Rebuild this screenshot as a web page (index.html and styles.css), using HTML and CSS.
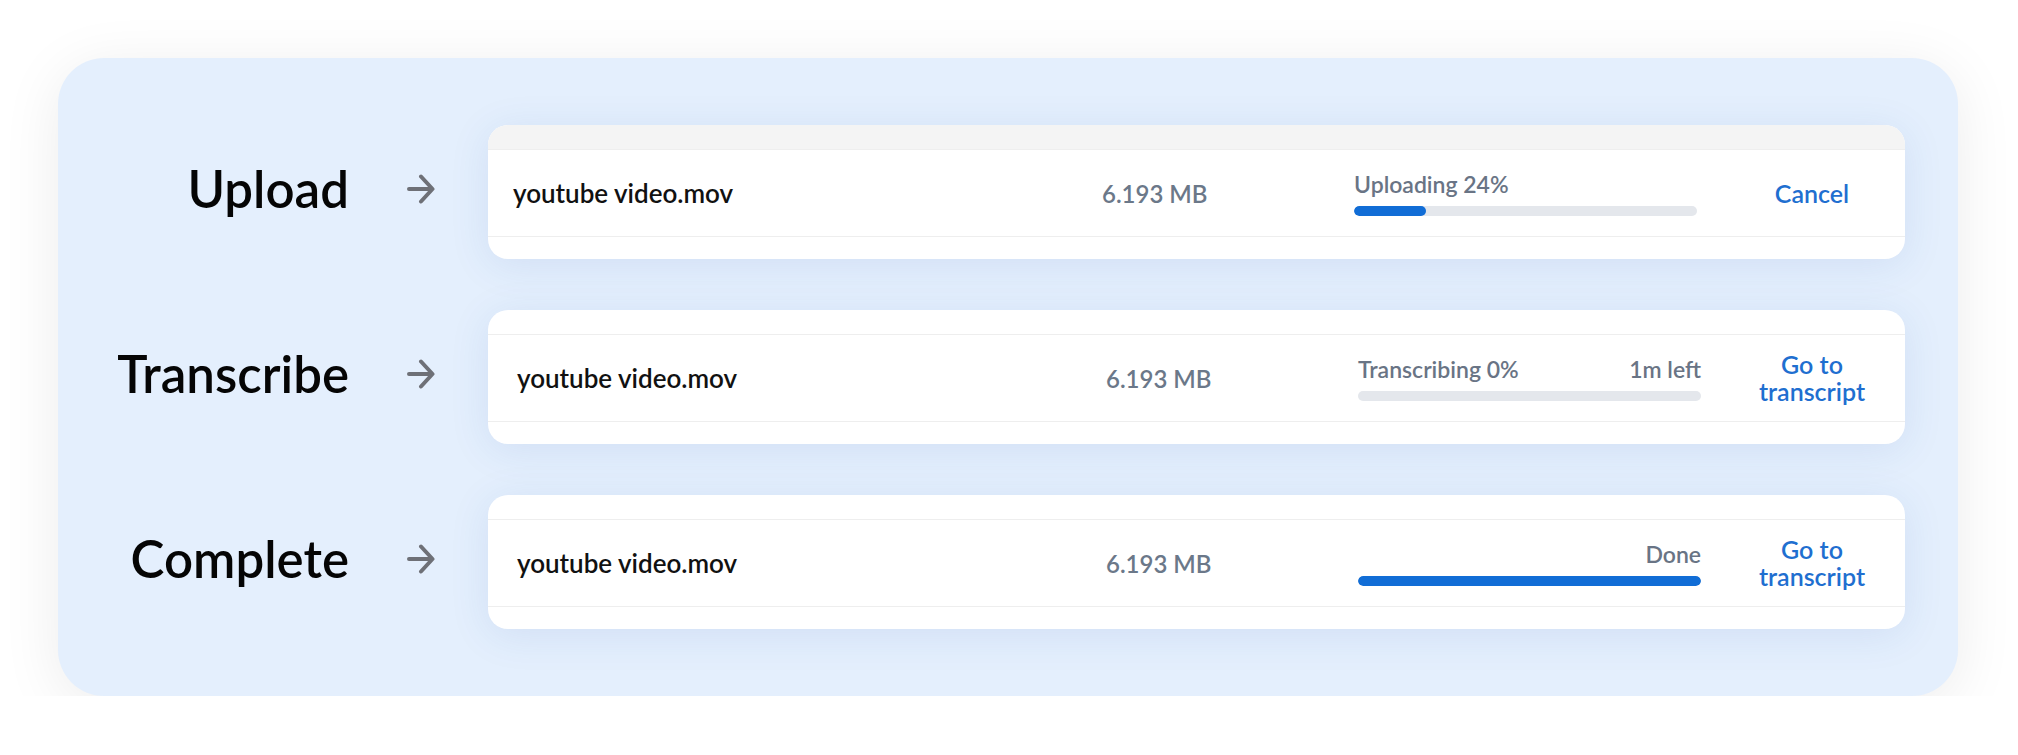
FILE: index.html
```html
<!DOCTYPE html>
<html lang="en">
<head>
<meta charset="utf-8">
<title>Upload flow</title>
<link rel="stylesheet" href="styles.css">
</head>
<body>
<main class="panel">
  <section class="step">
    <h2 class="step-label">Upload</h2>
    <svg class="step-arrow" viewBox="0 0 28 32" aria-hidden="true"><path d="M2 16H25M14 3.5L25.5 16L14 28.5"/></svg>
    <div class="card">
      <div class="card-head card-head--gray"></div>
      <div class="row row--shift">
        <div class="file-name">youtube video.mov</div>
        <div class="file-size">6.193 MB</div>
        <div class="progress">
          <div class="progress-text"><span>Uploading 24%</span></div>
          <div class="bar"><div class="bar-fill" style="width:21%"></div></div>
        </div>
        <div class="action">Cancel</div>
      </div>
      <div class="card-foot"></div>
    </div>
  </section>

  <section class="step">
    <h2 class="step-label">Transcribe</h2>
    <svg class="step-arrow" viewBox="0 0 28 32" aria-hidden="true"><path d="M2 16H25M14 3.5L25.5 16L14 28.5"/></svg>
    <div class="card">
      <div class="card-head"></div>
      <div class="row">
        <div class="file-name">youtube video.mov</div>
        <div class="file-size">6.193 MB</div>
        <div class="progress">
          <div class="progress-text"><span>Transcribing 0%</span><span>1m left</span></div>
          <div class="bar"></div>
        </div>
        <div class="action">Go to<br>transcript</div>
      </div>
      <div class="card-foot"></div>
    </div>
  </section>

  <section class="step">
    <h2 class="step-label">Complete</h2>
    <svg class="step-arrow" viewBox="0 0 28 32" aria-hidden="true"><path d="M2 16H25M14 3.5L25.5 16L14 28.5"/></svg>
    <div class="card">
      <div class="card-head"></div>
      <div class="row">
        <div class="file-name">youtube video.mov</div>
        <div class="file-size">6.193 MB</div>
        <div class="progress">
          <div class="progress-text progress-text--end"><span>Done</span></div>
          <div class="bar"><div class="bar-fill" style="width:100%"></div></div>
        </div>
        <div class="action">Go to<br>transcript</div>
      </div>
      <div class="card-foot"></div>
    </div>
  </section>
</main>
</body>
</html>
```

FILE: styles.css
```css
* { box-sizing: border-box; }

html, body {
  margin: 0;
  background: #ffffff;
}

body {
  font-family: Lato, "Open Sans", sans-serif;
  color: #0b0b0b;
  padding: 58px 0 0 58px;
}

.panel {
  width: 1900px;
  background: #e4effd;
  border-radius: 46px;
  padding: 67px 53px 67px 0;
  display: flex;
  flex-direction: column;
  gap: 51px;
  box-shadow: 0 10px 60px rgba(0, 0, 0, 0.08);
}

.step {
  display: flex;
  align-items: center;
}

.step-label {
  width: 291px;
  margin: 0 0 6px 0;
  text-align: right;
  font-size: 51px;
  font-weight: 600;
  line-height: 60px;
  color: #050505;
}

.step-arrow {
  width: 28px;
  height: 32px;
  margin: 0 53px 6px 58px;
  fill: none;
  stroke: #6e7077;
  stroke-width: 4;
  stroke-linecap: round;
  stroke-linejoin: round;
  flex: none;
}

.card {
  flex: 1;
  background: #ffffff;
  border-radius: 20px;
  overflow: hidden;
  box-shadow: 0 6px 40px rgba(40, 90, 170, 0.10);
}

.card-head {
  height: 25px;
  border-bottom: 1px solid #eeeeee;
}

.card-head--gray {
  background: #f4f4f4;
}

.card-foot {
  height: 22px;
}

.row {
  height: 87px;
  border-bottom: 1px solid #eeeeee;
  display: grid;
  grid-template-columns: 589px 252px 343px 1fr;
  align-items: center;
  padding-left: 29px;
}

.row--shift {
  padding-left: 25px;
}

.row--shift .action {
  padding-left: 22px;
}

.file-name {
  font-size: 26px;
  font-weight: 600;
  color: #111111;
}

.file-size {
  font-size: 24px;
  font-weight: 600;
  color: #6b7889;
}

.progress {
  display: flex;
  flex-direction: column;
  gap: 8px;
}

.progress-text {
  display: flex;
  justify-content: space-between;
  font-size: 23px;
  font-weight: 600;
  line-height: 28px;
  color: #697485;
}

.progress-text--end {
  justify-content: flex-end;
}

.bar {
  height: 10px;
  border-radius: 5px;
  background: #e4e7ec;
  overflow: hidden;
}

.bar-fill {
  height: 100%;
  background: #116dd6;
  border-radius: 5px;
}

.action {
  padding-left: 18px;
  text-align: center;
  font-size: 25px;
  font-weight: 600;
  line-height: 27px;
  color: #1f6fd0;
}
```
